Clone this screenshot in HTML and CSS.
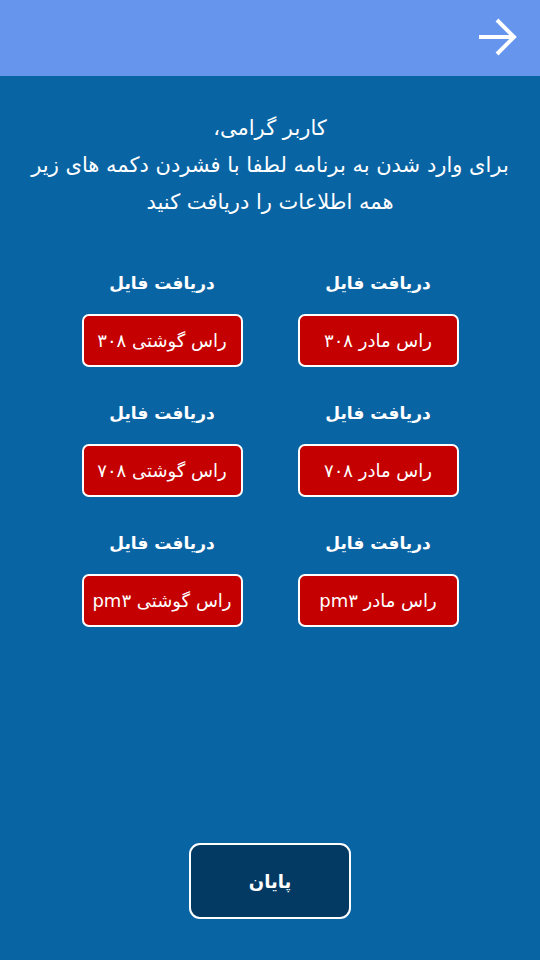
FILE: index.html
```html
<!DOCTYPE html>
<html lang="fa" dir="rtl">
<head>
  <meta charset="UTF-8">
  <title>دریافت فایل</title>
  <meta name="viewport" content="width=device-width, initial-scale=1.0" />
  <link rel="stylesheet" href="styles.css">
</head>
<body>

  <div class="topbar">
    <svg class="back" width="38" height="40" viewBox="0 0 38 40">
      <path d="M0 19 H35 M18 2 L35 19 L18 36" fill="none" stroke="#fff" stroke-width="4"/>
    </svg>
  </div>

  <div class="content">
    <p class="intro">
      کاربر گرامی،<br>
      برای وارد شدن به برنامه لطفا با فشردن دکمه های زیر<br>
      همه اطلاعات را دریافت کنید
    </p>

    <div class="files">
      <div class="file">
        <h3>دریافت فایل</h3>
        <button class="dl">راس مادر ۳۰۸</button>
      </div>
      <div class="file">
        <h3>دریافت فایل</h3>
        <button class="dl">راس گوشتی ۳۰۸</button>
      </div>
      <div class="file">
        <h3>دریافت فایل</h3>
        <button class="dl">راس مادر ۷۰۸</button>
      </div>
      <div class="file">
        <h3>دریافت فایل</h3>
        <button class="dl">راس گوشتی ۷۰۸</button>
      </div>
      <div class="file">
        <h3>دریافت فایل</h3>
        <button class="dl">راس مادر pm۳</button>
      </div>
      <div class="file">
        <h3>دریافت فایل</h3>
        <button class="dl">راس گوشتی pm۳</button>
      </div>
    </div>
  </div>

  <div class="footer">
    <button class="finish">پایان</button>
  </div>

</body>
</html>
```

FILE: styles.css
```css
html, body {
  height: 100%;
}
body {
  margin: 0;
  background: #0964a4;
  color: white;
  font-family: "DejaVu Sans", "Noto Sans", sans-serif;
  display: flex;
  flex-direction: column;
}
.topbar {
  height: 76px;
  background: #6595ec;
  display: flex;
  align-items: center;
  justify-content: flex-start;
  padding-right: 23px;
}
.back {
  display: block;
}
.content {
  flex: 1;
}
.intro {
  margin: 34px 0 0;
  text-align: center;
  font-size: 21px;
  line-height: 37px;
}
.files {
  display: grid;
  grid-template-columns: 161px 161px;
  column-gap: 55px;
  row-gap: 33px;
  justify-content: center;
  margin-top: 49px;
}
.file {
  text-align: center;
}
.file h3 {
  margin: 0 0 18px;
  font-size: 17px;
  line-height: 26px;
}
.dl {
  width: 161px;
  height: 53px;
  background: #c40000;
  color: white;
  border: 2px solid white;
  border-radius: 7px;
  font-family: inherit;
  font-size: 18px;
  cursor: pointer;
}
.footer {
  display: flex;
  justify-content: center;
  padding-bottom: 41px;
}
.finish {
  width: 162px;
  height: 76px;
  background: #033a63;
  color: white;
  border: 2px solid white;
  border-radius: 11px;
  font-family: inherit;
  font-size: 18px;
  font-weight: bold;
  cursor: pointer;
}
```
